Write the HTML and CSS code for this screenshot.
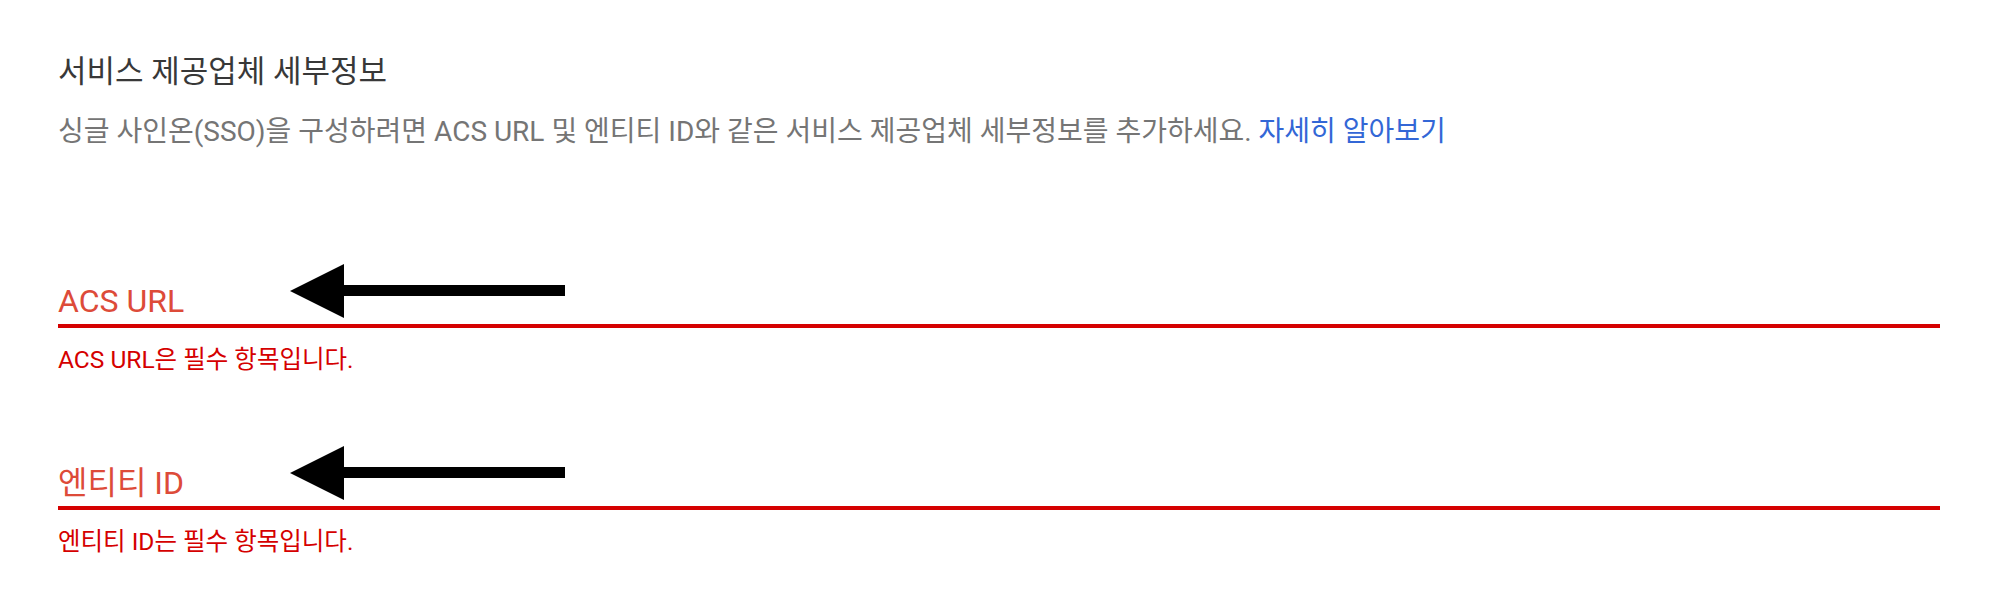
FILE: index.html
```html
<!DOCTYPE html>
<html lang="ko">
<head>
<meta charset="utf-8">
<title>서비스 제공업체 세부정보</title>
<link rel="stylesheet" href="styles.css">
</head>
<body>
<main class="page">
  <h1 class="title">서비스 제공업체 세부정보</h1>
  <p class="desc">싱글 사인온(SSO)을 구성하려면 ACS URL 및 엔티티 ID와 같은 서비스 제공업체 세부정보를 추가하세요. <a class="link" href="#">자세히 알아보기</a></p>

  <div class="field field-first">
    <div class="field-label">ACS URL</div>
    <div class="field-error">ACS URL은 필수 항목입니다.</div>
    <svg class="arrow" width="275" height="54" viewBox="0 0 275 54" aria-hidden="true">
      <polygon points="0,27 54,0 54,21 275,21 275,32 54,32 54,54" fill="#000"/>
    </svg>
  </div>

  <div class="field">
    <div class="field-label">엔티티 ID</div>
    <div class="field-error">엔티티 ID는 필수 항목입니다.</div>
    <svg class="arrow" width="275" height="54" viewBox="0 0 275 54" aria-hidden="true">
      <polygon points="0,27 54,0 54,21 275,21 275,32 54,32 54,54" fill="#000"/>
    </svg>
  </div>
</main>
</body>
</html>
```

FILE: styles.css
```css
html, body {
  margin: 0;
  padding: 0;
  background: #ffffff;
}

body {
  font-family: Roboto, "Noto Sans CJK KR", sans-serif;
}

.page {
  padding: 54px 60px 0 58px;
}

.title {
  margin: 0;
  font-size: 31px;
  line-height: 36px;
  font-weight: 400;
  color: #383838;
}

.desc {
  margin: 25px 0 0;
  font-size: 28px;
  line-height: 34px;
  color: #757575;
}

.link {
  color: #3367d6;
  text-decoration: none;
}

.field {
  position: relative;
  margin-top: 90px;
}

.field-first {
  margin-top: 133px;
}

.field-label {
  font-size: 32px;
  line-height: 38px;
  padding-bottom: 4px;
  border-bottom: 4px solid #d50000;
  color: #dd4b39;
}

.field-error {
  margin-top: 18px;
  font-size: 24.5px;
  line-height: 28px;
  color: #d50000;
}

.arrow {
  position: absolute;
  left: 232px;
  top: -18px;
  display: block;
}
```
